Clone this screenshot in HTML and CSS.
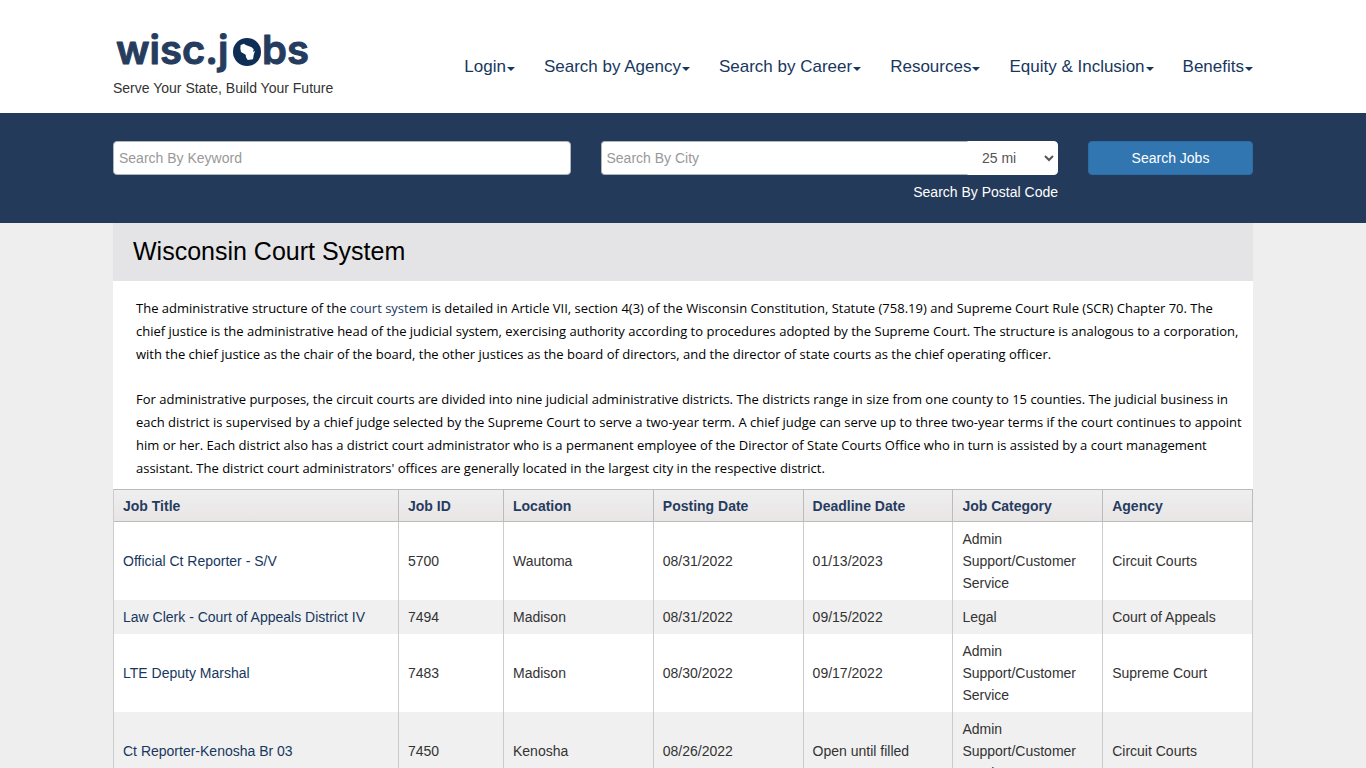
FILE: index.html
```html
<!DOCTYPE html>
<html lang="en">
<head>
<meta charset="utf-8">
<meta name="viewport" content="width=device-width, initial-scale=1">
<title>Wisconsin Court System - wisc.jobs</title>
<link rel="stylesheet" href="styles.css">
</head>
<body>
<header class="site-header">
  <div class="container header-row">
    <a class="brand" href="#">
      <svg class="logo" width="200" height="52" viewBox="0 0 200 52" role="img" aria-label="wisc.jobs">
        <g class="logo-text">
          <text x="3" y="40">wisc.j</text>
          <text x="149" y="40">bs</text>
        </g>
        <circle cx="134" cy="28" r="14" fill="#0f2e55"/>
        <path d="M127.700 21L131 19.700L132.700 21L138.700 23.300L140.700 25.300L140 28L142 26.700L140.700 31L140 35.300L134.700 36L133 33.300L132.700 30.700L128 28L127.300 24.300Z" fill="#fff"/>
      </svg>
      <span class="tagline">Serve Your State, Build Your Future</span>
    </a>
    <nav class="main-nav" aria-label="Main">
      <a href="#">Login<span class="caret"></span></a>
      <a href="#">Search by Agency<span class="caret"></span></a>
      <a href="#">Search by Career<span class="caret"></span></a>
      <a href="#">Resources<span class="caret"></span></a>
      <a href="#">Equity &amp; Inclusion<span class="caret"></span></a>
      <a href="#">Benefits<span class="caret"></span></a>
    </nav>
  </div>
</header>
<section class="search-band">
  <form class="container search-form">
    <input class="field" type="text" placeholder="Search By Keyword" aria-label="Search By Keyword">
    <div class="city">
      <div class="city-group">
        <input class="field city-input" type="text" placeholder="Search By City" aria-label="Search By City">
        <select class="radius" aria-label="Distance"><option>25 mi</option><option>50 mi</option></select>
      </div>
      <a class="postal" href="#">Search By Postal Code</a>
    </div>
    <button class="search-button" type="button">Search Jobs</button>
  </form>
</section>
<main class="container content">
  <h1 class="page-title">Wisconsin Court System</h1>
  <div class="intro">
    <p>The administrative structure of the <a href="#">court system</a> is detailed in Article VII, section 4(3) of the Wisconsin Constitution, Statute (758.19) and Supreme Court Rule (SCR) Chapter 70. The<br>
    chief justice is the administrative head of the judicial system, exercising authority according to procedures adopted by the Supreme Court. The structure is analogous to a corporation,<br>
    with the chief justice as the chair of the board, the other justices as the board of directors, and the director of state courts as the chief operating officer.</p>
    <p>For administrative purposes, the circuit courts are divided into nine judicial administrative districts. The districts range in size from one county to 15 counties. The judicial business in<br>
    each district is supervised by a chief judge selected by the Supreme Court to serve a two-year term. A chief judge can serve up to three two-year terms if the court continues to appoint<br>
    him or her. Each district also has a district court administrator who is a permanent employee of the Director of State Courts Office who in turn is assisted by a court management<br>
    assistant. The district court administrators' offices are generally located in the largest city in the respective district.</p>
  </div>
  <table class="jobs">
    <colgroup><col class="c-title"><col class="c-id"><col><col><col><col><col></colgroup>
    <thead>
      <tr><th>Job Title</th><th>Job ID</th><th>Location</th><th>Posting Date</th><th>Deadline Date</th><th>Job Category</th><th>Agency</th></tr>
    </thead>
    <tbody>
      <tr><td><a href="#">Official Ct Reporter - S/V</a></td><td>5700</td><td>Wautoma</td><td>08/31/2022</td><td>01/13/2023</td><td>Admin Support/Customer Service</td><td>Circuit Courts</td></tr>
      <tr><td><a href="#">Law Clerk - Court of Appeals District IV</a></td><td>7494</td><td>Madison</td><td>08/31/2022</td><td>09/15/2022</td><td>Legal</td><td>Court of Appeals</td></tr>
      <tr><td><a href="#">LTE Deputy Marshal</a></td><td>7483</td><td>Madison</td><td>08/30/2022</td><td>09/17/2022</td><td>Admin Support/Customer Service</td><td>Supreme Court</td></tr>
      <tr><td><a href="#">Ct Reporter-Kenosha Br 03</a></td><td>7450</td><td>Kenosha</td><td>08/26/2022</td><td>Open until filled</td><td>Admin Support/Customer Service</td><td>Circuit Courts</td></tr>
    </tbody>
  </table>
</main>
</body>
</html>
```
FILE: styles.css
```css
* { box-sizing: border-box; }
body {
  margin: 0;
  background: #eee;
  color: #333;
  font: 14px/22px "Liberation Sans", Arial, sans-serif;
}
html { scrollbar-width: none; }
a { color: #17375e; text-decoration: none; }
.container { width: calc(100% - 30px); max-width: 1140px; margin: 0 auto; }

.site-header { background: #fff; }
.header-row { display: flex; justify-content: space-between; padding: 24px 0 12px; }
.brand { display: flex; flex-direction: column; color: #333; }
.logo { display: block; overflow: visible; }
.logo-text {
  font: 600 40px Inter, sans-serif;
  fill: #263c5f;
  stroke: #263c5f;
  stroke-width: 1;
  stroke-linejoin: round;
}
.tagline { line-height: 25px; }
.main-nav { display: flex; gap: 29px; padding-top: 31px; font-size: 17px; line-height: 24px; white-space: nowrap; }
.main-nav a { display: flex; align-items: center; height: 24px; gap: 1px; }
.caret { border: 4px solid transparent; border-top-color: #17375e; border-bottom: 0; margin-top: 3px; }

.search-band { background: #243a5b; padding: 28px 0 19px; }
.search-form { display: grid; grid-template-columns: 1fr 1fr 165px; gap: 30px; align-items: start; }
.field {
  width: 100%;
  height: 34px;
  padding: 0 5px;
  border: 1px solid #aeb4bd;
  border-radius: 4px;
  background: #fff;
  font: inherit;
  color: #555;
}
.field::placeholder { color: #999; opacity: 1; }
.city { display: flex; flex-direction: column; }
.city-group { display: flex; }
.city-input { flex: 1; border-right: 0; border-radius: 4px 0 0 4px; }
.radius {
  width: 91px;
  height: 34px;
  padding: 0 3px 0 10px;
  border: 1px solid #fff;
  border-radius: 0 4px 4px 0;
  background: #fff;
  font: inherit;
  color: #555;
}
.postal { align-self: flex-end; margin-top: 5px; color: #fff; line-height: 24px; }
.search-button {
  height: 34px;
  border: 1px solid #2e6da4;
  border-radius: 4px;
  background: #3276b1;
  color: #fff;
  font: inherit;
}

.content { background: #fff; }
.page-title { margin: 0; padding: 13px 20px 15px; background: #e4e4e6; color: #000; font-size: 25px; font-weight: 400; line-height: 30px; }
.intro { padding: 16px 10px 9px 23px; color: #000; font: 13px/23px "Open Sans", sans-serif; white-space: nowrap; }
.intro p { margin: 0 0 22px; }
.intro p:last-child { margin-bottom: 0; }

.jobs { width: 100%; table-layout: fixed; border-collapse: separate; border-spacing: 0; border-left: 1px solid #ccc; }
.c-title { width: 285px; }
.c-id { width: 105px; }
.jobs th, .jobs td { padding: 6px 9px; border-right: 1px solid #ccc; text-align: left; vertical-align: middle; }
.jobs th {
  padding: 5px 9px 4px;
  border: solid #bbb;
  border-width: 1px 1px 1px 0;
  background: linear-gradient(#efefef, #e8e5e5);
  color: #263c5f;
}
.jobs tbody tr:nth-child(even) { background: #f0f0f0; }
```
